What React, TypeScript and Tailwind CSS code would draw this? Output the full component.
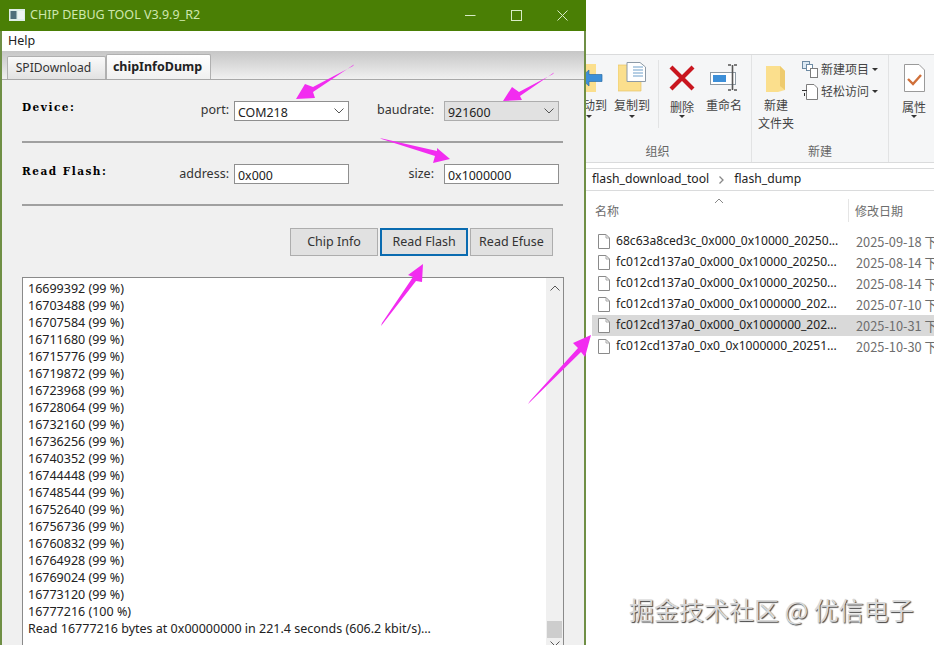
const UI = "font-['Noto_Sans','Noto_Sans_CJK_SC',sans-serif]";
const CJK = "font-['Noto_Sans_CJK_SC','Noto_Sans',sans-serif]";

const logRows = [
  "16699392 (99 %)", "16703488 (99 %)", "16707584 (99 %)", "16711680 (99 %)", "16715776 (99 %)",
  "16719872 (99 %)", "16723968 (99 %)", "16728064 (99 %)", "16732160 (99 %)", "16736256 (99 %)",
  "16740352 (99 %)", "16744448 (99 %)", "16748544 (99 %)", "16752640 (99 %)", "16756736 (99 %)",
  "16760832 (99 %)", "16764928 (99 %)", "16769024 (99 %)", "16773120 (99 %)", "16777216 (100 %)",
  "Read 16777216 bytes at 0x00000000 in 221.4 seconds (606.2 kbit/s)...",
];

const files = [
  ["68c63a8ced3c_0x000_0x10000_20250...", "2025-09-18 下", false],
  ["fc012cd137a0_0x000_0x10000_20250...", "2025-08-14 下", false],
  ["fc012cd137a0_0x000_0x10000_20250...", "2025-08-14 下", false],
  ["fc012cd137a0_0x000_0x1000000_202...", "2025-07-10 下", false],
  ["fc012cd137a0_0x000_0x1000000_202...", "2025-10-31 下", true],
  ["fc012cd137a0_0x0_0x1000000_20251...", "2025-10-30 下", false],
] as const;

function Chevron({ className = "" }: { className?: string }) {
  return (
    <svg width="10" height="6" viewBox="0 0 10 6" className={className}>
      <path d="M0.5 0.5 L5 5 L9.5 0.5" fill="none" stroke="#555" strokeWidth="1" />
    </svg>
  );
}

function Field({ value, combo, gray, w }: { value: string; combo?: boolean; gray?: boolean; w: string }) {
  return (
    <div className={`${w} h-[20px] flex items-center justify-between pl-[3px] pr-[4px] text-[12.4px] text-[#222] border ${gray ? "bg-[#e1e1e1] border-[#adadad]" : "bg-white border-[#8f8f8f]"}`}>
      <span className="leading-none pt-[4px]">{value}</span>
      {combo && <Chevron />}
    </div>
  );
}

function Caret() {
  return <div className="w-0 h-0 border-x-[3px] border-x-transparent border-t-[3px] border-t-[#333]" />;
}

function RibbonItem({ w, icon, label, label2, caret, ml = "", lower }: { w: string; icon: React.ReactNode; label: string; label2?: string; caret?: boolean; ml?: string; lower?: boolean }) {
  return (
    <div className={`${w} ${ml} shrink-0 flex flex-col items-center`}>
      <div className="h-[34px] flex items-end justify-center">{icon}</div>
      <div className={`${lower ? "mt-[6px]" : "mt-[4px]"} text-[12px] leading-[17px] text-[#444] whitespace-nowrap`}>{label}</div>
      {label2 && <div className="text-[12px] leading-[19px] text-[#444] whitespace-nowrap">{label2}</div>}
      {caret && <div className={lower ? "mt-[0px]" : "mt-[2px]"}><Caret /></div>}
    </div>
  );
}

function FileIcon() {
  return (
    <svg width="12" height="15" viewBox="0 0 12 15" className="shrink-0">
      <path d="M0.5 0.5 H8 L11.5 4 V14.5 H0.5 Z" fill="#fff" stroke="#8a8a8a" />
      <path d="M8 0.5 V4 H11.5" fill="none" stroke="#a8a8a8" />
    </svg>
  );
}

export default function App() {
  return (
    <div className={`relative w-[934px] h-[645px] overflow-hidden bg-white flex ${UI}`}>
      {/* Debug tool window */}
      <div className="w-[586px] h-full shrink-0 flex flex-col bg-[#f0f0f0] border-l-2 border-r-2 border-[#6f8f45]">
        <div className="-mx-[2px] h-[31px] shrink-0 bg-[#4a7f05] flex items-center">
          <svg width="16" height="13" viewBox="0 0 16 13" className="ml-[9px] mt-[-1px]">
            <rect width="16" height="12" fill="#dfeee8" />
            <rect x="1.5" y="2" width="6" height="8" fill="#4f6f7a" />
            <rect x="9" y="2" width="6" height="8" fill="#eef4f2" />
          </svg>
          <span className="ml-[5px] text-[12.5px] text-[#cfe7ae] whitespace-nowrap">CHIP DEBUG TOOL V3.9.9_R2</span>
          <div className="ml-auto mr-[18px] flex items-center gap-[35px]">
            <svg width="11" height="11" viewBox="0 0 11 11"><path d="M0 5.5 H10.5" stroke="#d8ebc6" strokeWidth="1" /></svg>
            <svg width="11" height="11" viewBox="0 0 11 11"><rect x="0.5" y="0.5" width="10" height="10" fill="none" stroke="#d8ebc6" /></svg>
            <svg width="11" height="11" viewBox="0 0 11 11"><path d="M0.5 0.5 L10.5 10.5 M10.5 0.5 L0.5 10.5" stroke="#d8ebc6" strokeWidth="1" /></svg>
          </div>
        </div>
        <div className="h-[20px] shrink-0 bg-white flex items-center pl-[6px] text-[12.5px] text-[#222]">Help</div>
        <div className="h-[29px] shrink-0 flex items-end pl-[5px] bg-gradient-to-b from-[#c6c6c6] to-[#f0f0f0] border-b border-[#a8a8a8]">
          <div className="w-[99px] h-[23px] flex items-center justify-center pr-[6px] text-[12.1px] text-[#333] bg-gradient-to-b from-[#fafafa] to-[#e2e2e2] border border-b-0 border-[#b0b0b0] rounded-t-[2px]">SPIDownload</div>
          <div className="w-[105px] h-[25px] flex items-center justify-center pr-[2px] text-[12.5px] font-bold text-[#222] bg-gradient-to-b from-[#ffffff] to-[#f0f0f0] border border-b-0 border-[#b0b0b0] rounded-t-[2px]">chipInfoDump</div>
        </div>
        <div className="flex-1 min-h-0 pl-[20px] flex flex-col text-[#333]">
          <div className="mt-[21px] h-[20px] shrink-0 flex items-center text-[12.5px]">
            <span className="w-[130px] font-['DejaVu_Serif',serif] font-bold text-[10.5px] tracking-[1.5px] text-black pb-[6px]">Device:</span>
            <span className="w-[77px] text-right mr-[5px] pb-[1px]">port:</span>
            <Field w="w-[115px]" value="COM218" combo />
            <span className="w-[85px] text-right mr-[10px] pb-[2px]">baudrate:</span>
            <Field w="w-[115px]" value="921600" combo gray />
          </div>
          <div className="mt-[20px] w-[541px] h-[2px] shrink-0 bg-[#a0a0a0]" />
          <div className="mt-[21px] h-[20px] shrink-0 flex items-center text-[12.5px]">
            <span className="w-[130px] font-['DejaVu_Serif',serif] font-bold text-[10.5px] tracking-[1.5px] text-black pb-[4px] whitespace-nowrap">Read Flash:</span>
            <span className="w-[77px] text-right mr-[5px]">address:</span>
            <Field w="w-[115px]" value="0x000" />
            <span className="w-[85px] text-right mr-[10px]">size:</span>
            <Field w="w-[115px]" value="0x1000000" />
          </div>
          <div className="mt-[20px] w-[541px] h-[2px] shrink-0 bg-[#a0a0a0]" />
          <div className="mt-[22px] ml-[268px] h-[28px] shrink-0 flex gap-[2px] text-[12.5px] text-[#333]">
            <div className="w-[88px] flex items-center justify-center bg-[#e1e1e1] border border-[#adadad]">Chip Info</div>
            <div className="w-[88px] flex items-center justify-center bg-[#e1e1e1] border-2 border-[#0a6bb0]">Read Flash</div>
            <div className="w-[83px] flex items-center justify-center bg-[#e1e1e1] border border-[#adadad]">Read Efuse</div>
          </div>
          <div className="mt-[21px] w-[542px] flex-1 min-h-0 flex bg-white border border-b-0 border-[#8a8a8a] overflow-hidden">
            <div className="flex-1 pl-[5px] pt-[2px] text-[12.5px] leading-[17px] text-[#222]">
              {logRows.map((r, i) => <div key={i} className="whitespace-nowrap">{r}</div>)}
            </div>
            <div className="w-[17px] shrink-0 bg-[#f0f0f0] flex flex-col items-center pt-[7px]">
              <Chevron className="rotate-180" />
              <div className="mt-auto w-[15px] h-[17px] bg-[#cdcdcd]" />
              <Chevron className="mt-[3px] mb-[-2px]" />
            </div>
          </div>
        </div>
      </div>

      {/* Explorer */}
      <div className={`flex-1 min-w-0 flex flex-col overflow-hidden ${CJK}`}>
        <div className="h-[54px] shrink-0 bg-white" />
        <div className="h-[109px] shrink-0 bg-[#f5f6f7] border-y border-[#dadbdc] flex">
          <div className="w-[166px] shrink-0 border-r border-[#e2e3e4] flex flex-col">
            <div className="flex flex-1 pt-[3px]">
              <RibbonItem w="w-[42px]" ml="-ml-[18px]" caret label="移动到" icon={
                <svg width="36" height="28" viewBox="0 0 36 28">
                  <path d="M0 0 H25 V28 H0 Z" fill="#fbdf8d" />
                  <path d="M9 14 L18 6 V10.5 H31 V17.5 H18 V22 Z" fill="#3d8fd8" stroke="#2c6fa8" strokeWidth="0.7" />
                </svg>
              } />
              <RibbonItem w="w-[38px]" ml="ml-[3px]" caret label="复制到" icon={
                <svg width="28" height="30" viewBox="0 0 28 30">
                  <path d="M0 3 H23 V29 H0 Z" fill="#fbdf8d" stroke="#e8c468" strokeWidth="0.7" />
                  <path d="M9 0.5 H22 L27.5 5 V19.5 H9 Z" fill="#fff" stroke="#8d9aa6" />
                  <path d="M15 5 H25 M15 8 H25 M15 11 H25 M15 14 H25" stroke="#6f9fc9" strokeWidth="1" />
                </svg>
              } />
              <div className="w-px h-[68px] ml-[7px] mt-[2px] bg-[#e2e3e4]" />
              <RibbonItem w="w-[36px]" ml="ml-[5px]" lower caret label="删除" icon={
                <svg width="26" height="26" viewBox="0 0 26 26" className="mb-[1px]">
                  <path d="M2 2 L24 24 M24 2 L2 24" stroke="#c9161f" strokeWidth="4.2" />
                </svg>
              } />
              <RibbonItem w="w-[42px]" ml="ml-[3px]" label="重命名" icon={
                <svg width="29" height="27" viewBox="0 0 29 27" className="mb-[1px]">
                  <rect x="0.5" y="8.5" width="25" height="12" fill="#fff" stroke="#8e9aa4" />
                  <rect x="3" y="11" width="13" height="7" fill="#3d8fd8" />
                  <path d="M18 1 H21 M24 1 H27 M22.5 1 V26 M18 26 H21 M24 26 H27" stroke="#555" strokeWidth="1.6" fill="none" />
                </svg>
              } />
            </div>
            <div className="h-[24px] shrink-0 pr-[22px] flex items-center justify-center text-[12px] text-[#666] pt-[2px]">组织</div>
          </div>
          <div className="w-[137px] shrink-0 border-r border-[#e2e3e4] flex flex-col">
            <div className="flex flex-1 pt-[3px]">
              <RibbonItem w="w-[42px]" ml="ml-[3px]" label="新建" label2="文件夹" icon={
                <svg width="20" height="26" viewBox="0 0 20 26">
                  <path d="M0 0 H14 L19 5 V24 L12 26 H0 Z" fill="#fbdf8d" />
                  <path d="M14 0 L19 5 V24 L14 20 Z" fill="#eecb6f" />
                </svg>
              } />
              <div className="ml-[5px] mt-[2px] flex flex-col gap-[4px] text-[12px] text-[#444]">
                <div className="h-[18px] flex items-center gap-[3px]">
                  <svg width="16" height="17" viewBox="0 0 16 17">
                    <rect x="0.5" y="0.5" width="7" height="7" fill="#dce9f4" stroke="#6d8ba4" />
                    <rect x="4.5" y="3.5" width="6" height="6" fill="#fff" stroke="#6d8ba4" />
                    <rect x="8.5" y="7.5" width="7" height="9" fill="#fff" stroke="#7d7d7d" />
                  </svg>
                  <span className="whitespace-nowrap">新建项目</span>
                  <Caret />
                </div>
                <div className="h-[18px] flex items-center gap-[3px]">
                  <svg width="16" height="17" viewBox="0 0 16 17">
                    <path d="M4.5 1.5 H12 L15.5 5 V16.5 H4.5 Z" fill="#fff" stroke="#7d7d7d" />
                    <path d="M0 7.5 H5 M2.5 10 V13" stroke="#333" strokeWidth="1" />
                  </svg>
                  <span className="whitespace-nowrap">轻松访问</span>
                  <Caret />
                </div>
              </div>
            </div>
            <div className="h-[24px] shrink-0 flex items-center justify-center text-[12px] text-[#666] pt-[2px]">新建</div>
          </div>
          <div className="flex-1 flex pt-[3px] pl-[5px]">
            <RibbonItem w="w-[40px]" lower caret label="属性" icon={
              <svg width="21" height="28" viewBox="0 0 21 28">
                <path d="M0.5 0.5 H15 L20.5 6 V27.5 H0.5 Z" fill="#fff" stroke="#9a9a9a" />
                <path d="M4 15 L9 20 L17 11" fill="none" stroke="#d0703a" strokeWidth="2.4" />
              </svg>
            } />
          </div>
        </div>
        <div className="h-[5px] shrink-0 bg-white" />
        <div className="h-[23px] shrink-0 border-y border-[#dadbdc] flex items-center pl-[6px] text-[12.2px] text-[#222] font-['Noto_Sans',sans-serif]">
          <span>flash_download_tool</span>
          <svg width="5" height="8" viewBox="0 0 5 8" className="mx-[10px]"><path d="M0.5 0.5 L4 4 L0.5 7.5" fill="none" stroke="#888" strokeWidth="1.3" /></svg>
          <span>flash_dump</span>
        </div>
        <div className="relative h-[31px] shrink-0 flex items-end text-[12px] text-[#6d6d6d]">
          <svg width="10" height="6" viewBox="0 0 10 6" className="absolute left-[128px] top-[7px]"><path d="M1 5 L5 1 L9 5" fill="none" stroke="#888" /></svg>
          <div className="w-[263px] pl-[9px] h-[23px] flex items-center border-r border-[#e5e5e5]">名称</div>
          <div className="pl-[6px] h-[23px] flex items-center whitespace-nowrap">修改日期</div>
        </div>
        <div className="mt-[9px] pl-[6px] flex flex-col">
          {files.map(([name, date, sel], i) => (
            <div key={i} className={`h-[21px] flex items-center pl-[6px] whitespace-nowrap ${sel ? "bg-[#d9d9d9]" : ""}`}>
              <FileIcon />
              <span className="ml-[6px] w-[240px] shrink-0 text-[12.1px] text-[#222] font-['Noto_Sans',sans-serif]">{name}</span>
              <span className="text-[12.8px] text-[#6d6d6d]">{date}</span>
            </div>
          ))}
        </div>
      </div>

      {/* Annotation arrows */}
      <svg width="934" height="645" viewBox="0 0 934 645" className="absolute inset-0 pointer-events-none">
        <g fill="#f22cf0">
          <polygon points="354,64.5 353,66 313,87 305,84 296,99 315,98 313,92" />
          <polygon points="554,72.5 553,74 519,92 512,87 503,101 522,100 520,96" />
          <polygon points="380,138.5 382,138.5 437,151 437,148 450,159 433,163 435,156" />
          <polygon points="381,326 382,323 413,277 408,275 423,264 422,282 416,281" />
          <polygon points="528,404 530,401 578,348 573,343 591,335 585,357 581,352" />
        </g>
      </svg>
      <div className={`absolute left-[629px] top-[593px] text-[25px] leading-[32px] whitespace-nowrap text-[#d8d8d8] [text-shadow:1px_1px_1px_#444] ${CJK}`}>掘金技术社区 @ 优信电子</div>
    </div>
  );
}
